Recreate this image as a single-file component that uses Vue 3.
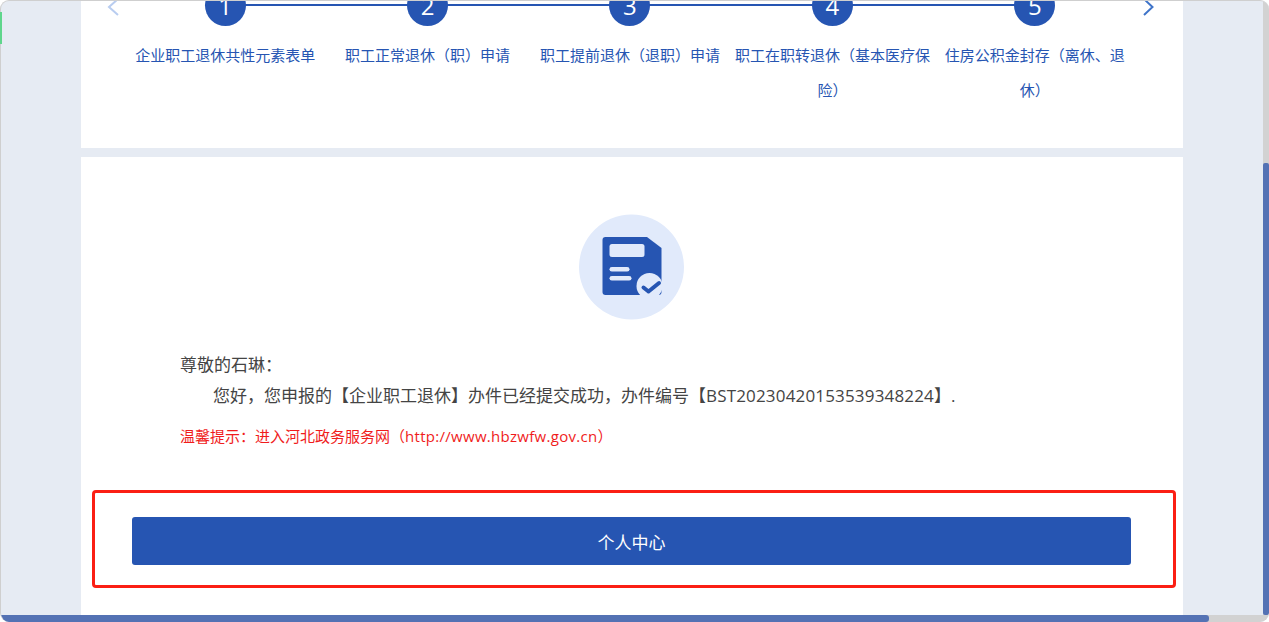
<script setup>
const steps = [
  '企业职工退休共性元素表单',
  '职工正常退休（职）申请',
  '职工提前退休（退职）申请',
  '职工在职转退休（基本医疗保险）',
  '住房公积金封存（离休、退休）'
]
</script>

<template>
  <div class="page">
    <div class="window">
      <div class="content">
        <section class="card steps-card">
          <svg class="arrow arrow-prev" width="14" height="18" viewBox="0 0 14 18">
            <path d="M12 -1 L3 7 L12 15" fill="none" stroke="#b9cdf0" stroke-width="2" />
          </svg>
          <ol class="steps">
            <li v-for="(step, i) in steps" :key="step" class="step">
              <span class="step-num">{{ i + 1 }}</span>
              <span class="step-name">{{ step }}</span>
            </li>
          </ol>
          <svg class="arrow arrow-next" width="14" height="18" viewBox="0 0 14 18">
            <path d="M2 -1 L10.5 7 L2 15" fill="none" stroke="#3f74c9" stroke-width="2" />
          </svg>
        </section>

        <section class="card result-card">
          <svg class="result-icon" width="106" height="106" viewBox="0 0 106 106">
            <circle cx="53" cy="53" r="52.5" fill="#e1eafb" />
            <path d="M27 23 H68.5 L83 34 V78 a3 3 0 0 1 -3 3 H27 a3 3 0 0 1 -3 -3 V26 a3 3 0 0 1 3 -3 Z" fill="#2655b2" />
            <rect x="31" y="30" width="35" height="13" rx="2.5" fill="#e1eafb" />
            <rect x="31" y="53" width="20" height="4.6" rx="2.3" fill="#e1eafb" />
            <rect x="31" y="62" width="22" height="4.6" rx="2.3" fill="#e1eafb" />
            <circle cx="71" cy="72" r="13" fill="#e1eafb" />
            <path d="M65 73.5 L70 77.5 L80.5 69" fill="none" stroke="#2655b2" stroke-width="4" stroke-linecap="round" stroke-linejoin="round" />
          </svg>

          <div class="message">
            <p class="greeting">尊敬的石琳：</p>
            <p class="notice">您好，您申报的【企业职工退休】办件已经提交成功，办件编号【<span class="code">BST20230420153539348224</span>】.</p>
            <p class="tip">温馨提示：进入河北政务服务网（<span class="link">http://www.hbzwfw.gov.cn</span>）</p>
          </div>

          <button class="center-btn" type="button">个人中心</button>
        </section>
      </div>

      <!-- Red annotation box drawn over the screenshot -->
      <div class="mark"></div>

      <div class="scroll-y"><div class="scroll-y-thumb"></div></div>
      <div class="scroll-x"><div class="scroll-x-thumb"></div></div>
    </div>
    <div class="edge-tab"></div>
  </div>
</template>

<style>
html,
body {
  margin: 0;
  background: #fff;
  overflow: hidden;
}
</style>

<style scoped>
.page {
  position: relative;
  width: 1269px;
  height: 622px;
  overflow: hidden;
}

.window {
  position: relative;
  box-sizing: border-box;
  width: 1269px;
  height: 622px;
  overflow: hidden;
  background: #e6ebf3;
  border: 1px solid #cfcfcf;
  border-right: 0;
  border-bottom: 0;
  border-radius: 9px;
  font-family: "Open Sans", "Noto Sans CJK SC", sans-serif;
  text-spacing-trim: space-all;
}

.content {
  display: flex;
  flex-direction: column;
  gap: 9px;
  width: 1102px;
  margin-left: 80px;
  margin-top: -1px;
}

.card {
  position: relative;
  background: #fff;
}

.steps-card {
  height: 148px;
  overflow: hidden;
  padding: 0 47px 0 43px;
  box-sizing: border-box;
}

.arrow {
  position: absolute;
  top: 0;
}

.arrow-prev {
  left: 25px;
}

.arrow-next {
  left: 1061px;
}

.steps {
  display: grid;
  grid-template-columns: repeat(5, 1fr);
  margin: -15px 0 0;
  padding: 0;
  list-style: none;
}

.step {
  position: relative;
  display: flex;
  flex-direction: column;
  align-items: center;
}

.step:not(:last-child)::after {
  content: "";
  position: absolute;
  top: 19px;
  left: 50%;
  width: 100%;
  height: 2px;
  background: #2655b2;
}

.step-num {
  position: relative;
  z-index: 1;
  width: 41px;
  height: 41px;
  border-radius: 50%;
  background: #2655b2;
  color: #fff;
  font-size: 24px;
  line-height: 41px;
  text-align: center;
}

.step-name {
  margin-top: 12px;
  color: #2655b2;
  font-size: 15px;
  line-height: 35px;
  text-align: center;
}

.result-card {
  height: 470px;
  padding-top: 57px;
  box-sizing: border-box;
}

.result-icon {
  display: block;
  margin: 0 auto;
  transform: translateX(-0.5px);
}

.message {
  margin: 29px 99px 0;
  color: #444;
  font-size: 17px;
}

.message p {
  margin: 0;
}

.greeting,
.notice {
  line-height: 31px;
}

.notice {
  text-indent: 33px;
}

.code {
  letter-spacing: 0.17px;
}

.message .tip {
  margin-top: 10px;
  color: #f01c1c;
  font-size: 15px;
  line-height: 31px;
}

.link {
  letter-spacing: 0.29px;
}

.center-btn {
  display: block;
  width: 999px;
  height: 48px;
  margin: 65px 0 0 51px;
  border: 0;
  border-radius: 3px;
  background: #2655b2;
  color: #fff;
  font-family: inherit;
  font-size: 17px;
}

.mark {
  position: absolute;
  left: 91px;
  top: 489px;
  width: 1084px;
  height: 98px;
  box-sizing: border-box;
  border: 3px solid #fb1f14;
  border-radius: 4px;
}

.scroll-y {
  position: absolute;
  top: 0;
  right: 0;
  bottom: 0;
  width: 6px;
  background: #d2d2d2;
}

.scroll-y-thumb {
  height: 452px;
  margin-top: 162px;
  background: #5472b4;
  border-radius: 2px;
}

.scroll-x {
  position: absolute;
  left: 0;
  right: 6px;
  bottom: 0;
  height: 7px;
  background: #d2d2d2;
}

.scroll-x-thumb {
  width: 1208px;
  height: 7px;
  background: #5472b4;
  border-radius: 0 3px 3px 0;
}

.edge-tab {
  position: absolute;
  left: 0;
  top: 12px;
  width: 2px;
  height: 32px;
  background: #5fd68c;
}
</style>
